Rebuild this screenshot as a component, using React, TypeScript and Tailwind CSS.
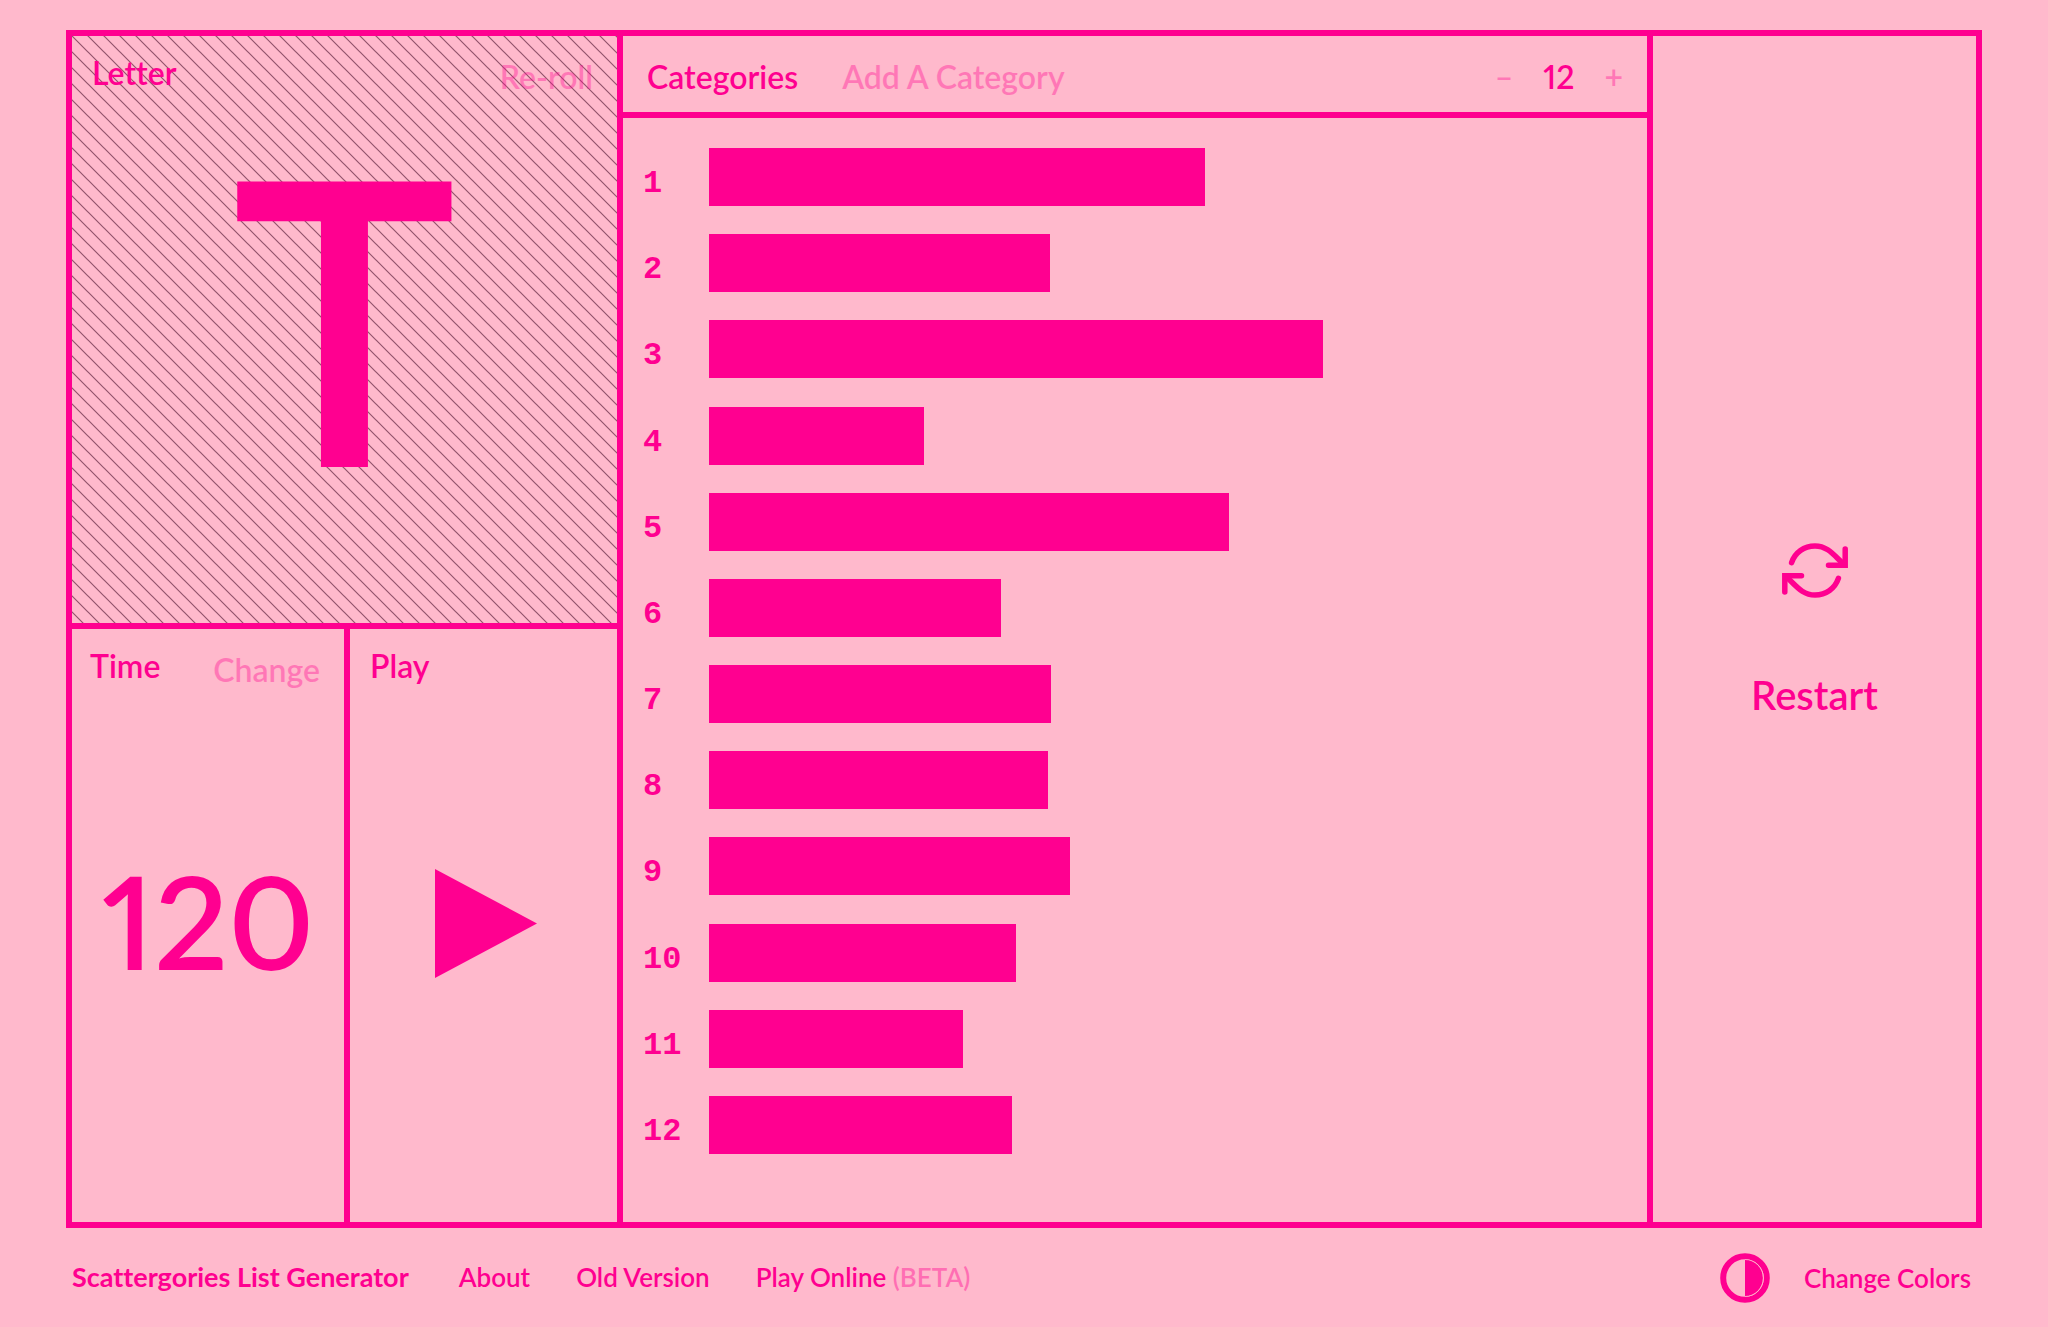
import React from "react";

const barWidths = [496, 341, 614, 215, 520, 292, 342, 339, 361, 307, 254, 303];

function Hatching() {
  return (
    <svg className="col-start-1 row-start-1 h-full w-full min-h-0" aria-hidden="true">
      <defs>
        <pattern id="hatch" width="16" height="16" patternUnits="userSpaceOnUse">
          <path d="M-2 -2L18 18M-2 14L2 18M14 -2L18 2" stroke="#38001c" strokeOpacity="0.55" strokeWidth="1.2" />
        </pattern>
      </defs>
      <rect width="100%" height="100%" fill="url(#hatch)" />
    </svg>
  );
}

function RestartIcon() {
  return (
    <svg
      width="66"
      height="55"
      viewBox="0 0 66 55"
      fill="none"
      stroke="currentColor"
      strokeWidth="5.5"
      strokeLinecap="round"
      strokeLinejoin="round"
      aria-hidden="true"
    >
      <path d="M9.6 19.6C13 9.6 22 3 33 3C46 3 52 12.500 62 21.500" />
      <path d="M63.200 6V22.300H46.500" strokeLinejoin="miter" />
      <path d="M56.400 35.400C53 45.400 44 52 33 52C20 52 14 42.500 4 33.500" />
      <path d="M2.800 49V32.700H19.500" strokeLinejoin="miter" />
    </svg>
  );
}

function ContrastIcon() {
  return (
    <svg width="50" height="50" viewBox="0 0 50 50" aria-hidden="true">
      <circle cx="25" cy="25" r="21.800" fill="none" stroke="currentColor" strokeWidth="6" />
      <path d="M25 6.500A18 18.500 0 0 1 25 43.500Z" fill="currentColor" />
      <path d="M25 6.500A18.400 18.500 0 0 1 25 43.500" fill="none" stroke="#ffb9cc" strokeWidth="0.800" />
    </svg>
  );
}

export default function App() {
  return (
    <div className="flex min-h-screen flex-col bg-[#ffb9cc] font-['Lato',sans-serif] font-semibold text-[#ff0090] [font-variant-ligatures:none]">
      <main className="mx-[66px] mt-[30px] grid grow grid-cols-[551fr_1030fr_323fr] border-6 border-[#ff0090]">
        <div className="grid grid-rows-2 border-r-6 border-[#ff0090]">
          <section className="grid grid-cols-1 grid-rows-1 border-b-6 border-[#ff0090]">
            <Hatching />
            <div className="z-10 col-start-1 row-start-1 flex items-start justify-between pt-[17px] pr-6 pl-5 text-[32px] leading-10">
              <h2>Letter</h2>
              <button type="button" className="pt-1 opacity-35">Re-roll</button>
            </div>
            <div className="col-start-1 row-start-1 flex items-center justify-center pb-9 font-['Open_Sans',sans-serif] text-[400px] leading-none">
              T
            </div>
          </section>
          <div className="grid grid-cols-[278fr_267fr]">
            <section className="grid grid-cols-1 grid-rows-1 border-r-6 border-[#ff0090]">
              <div className="z-10 col-start-1 row-start-1 flex items-start justify-between pt-[17px] pr-6 pl-[18px] text-[32px] leading-10">
                <h2>Time</h2>
                <button type="button" className="pt-1 opacity-35">Change</button>
              </div>
              <div className="col-start-1 row-start-1 flex items-center justify-center pb-3 text-[130px] leading-none proportional-nums">
                120
              </div>
            </section>
            <section className="grid grid-cols-1 grid-rows-1">
              <h2 className="col-start-1 row-start-1 pt-[17px] pl-5 text-[32px] leading-10">Play</h2>
              <button
                type="button"
                aria-label="Play"
                className="col-start-1 row-start-1 flex items-center justify-center pb-1 pl-1"
              >
                <svg width="102" height="109" viewBox="0 0 102 109" fill="currentColor" aria-hidden="true">
                  <path d="M0 0L102 54.500L0 109Z" />
                </svg>
              </button>
            </section>
          </div>
        </div>

        <section className="flex flex-col border-r-6 border-[#ff0090]">
          <header className="flex h-[82px] shrink-0 items-center justify-between border-b-6 border-[#ff0090] pt-1.5 pr-6 pl-6 text-[32px] leading-10">
            <div className="flex gap-11">
              <h2>Categories</h2>
              <button type="button" className="opacity-35">Add A Category</button>
            </div>
            <div className="flex gap-[30px]">
              <button type="button" aria-label="Fewer categories" className="opacity-35">–</button>
              <span className="proportional-nums">12</span>
              <button type="button" aria-label="More categories" className="opacity-35">+</button>
            </div>
          </header>
          <ol className="flex grow flex-col justify-between pt-[30px] pb-[68px] pl-5">
            {barWidths.map((width, i) => (
              <li key={i} className="flex h-[58px] items-center">
                <span className="w-[66px] shrink-0 pt-[14px] font-['Liberation_Mono',monospace] text-[32px] leading-9 font-bold">
                  {i + 1}
                </span>
                <span className="h-full bg-[#ff0090]" style={{ width }} />
              </li>
            ))}
          </ol>
        </section>

        <button type="button" className="flex flex-col items-center justify-center gap-[73px] pt-1 text-[40px] leading-[48px]">
          <RestartIcon />
          Restart
        </button>
      </main>

      <footer className="flex h-[99px] shrink-0 items-center justify-between pr-[77px] pl-[72px] text-[26px] leading-8">
        <nav className="flex items-baseline gap-[46px] pb-0.5">
          <a href="#home" className="mr-1 text-[27px] font-bold">Scattergories List Generator</a>
          <a href="#about">About</a>
          <a href="#old">Old Version</a>
          <a href="#online">
            Play Online <span className="opacity-40">(BETA)</span>
          </a>
        </nav>
        <button type="button" className="flex items-center gap-[34px]">
          <ContrastIcon />
          Change Colors
        </button>
      </footer>
    </div>
  );
}
